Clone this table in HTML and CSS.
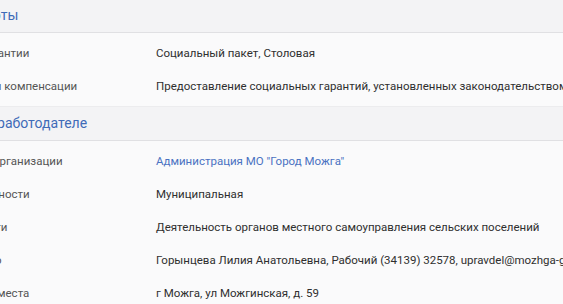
FILE: index.html
```html
<!DOCTYPE html>
<html>
  <head>
    <meta charset="UTF-8"/>
    <title>Вакансия: условия работы и работодатель</title>
    <link rel="stylesheet" href="styles.css">
  </head>
  <body>
    <article class="vacancy">
        <section class="block">
            <h2 class="block-title">Гарантии и льготы</h2>
            <dl class="props">
                <div class="prop">
                    <dt>Социальные гарантии</dt>
                    <dd>Социальный пакет, Столовая</dd>
                </div>
                <div class="prop">
                    <dt>Прочие бонусы и компенсации</dt>
                    <dd>Предоставление социальных гарантий, установленных законодательством РФ</dd>
                </div>
            </dl>
        </section>

        <section class="block">
            <h2 class="block-title">Информация о работодателе</h2>
            <dl class="props">
                <div class="prop">
                    <dt>Наименование организации</dt>
                    <dd><a href="#">Администрация МО "Город Можга"</a></dd>
                </div>
                <div class="prop">
                    <dt>Форма собственности</dt>
                    <dd>Муниципальная</dd>
                </div>
                <div class="prop">
                    <dt>Вид деятельности</dt>
                    <dd>Деятельность органов местного самоуправления сельских поселений</dd>
                </div>
                <div class="prop">
                    <dt>Контактное лицо</dt>
                    <dd>Горынцева Лилия Анатольевна, Рабочий (34139) 32578, upravdel@mozhga-gov.ru</dd>
                </div>
                <div class="prop">
                    <dt>Адрес рабочего места</dt>
                    <dd>г Можга, ул Можгинская, д. 59</dd>
                </div>
            </dl>
        </section>
    </article>
  </body>
</html>
```

FILE: styles.css
```css
html, body { padding: 0; margin: 0; }
body {
    background: #fafafb;
    font-family: Roboto, "Noto Sans", sans-serif;
    overflow: hidden;
}
.vacancy {
    width: 900px;
    margin: -2px 0 0 -105px;
}
.block {
    border-top: 1px solid #ececee;
}
.block-title {
    margin: 0;
    padding: 0 1px;
    height: 33px;
    line-height: 33px;
    font-size: 14px;
    font-weight: normal;
    color: #3f6bb8;
    background: #f3f3f5;
    border-bottom: 1px solid #e0e0e3;
}
.props {
    margin: 0;
    padding: 4px 14px 3px;
}
.prop {
    display: grid;
    grid-template-columns: 247px 1fr;
    height: 33px;
    line-height: 33px;
    font-size: 11.5px;
    white-space: nowrap;
}
.prop dt { color: #555; }
.prop dd { margin: 0; color: #2f2f2f; }
.prop a {
    color: #4a72c2;
    text-decoration: none;
}
```
